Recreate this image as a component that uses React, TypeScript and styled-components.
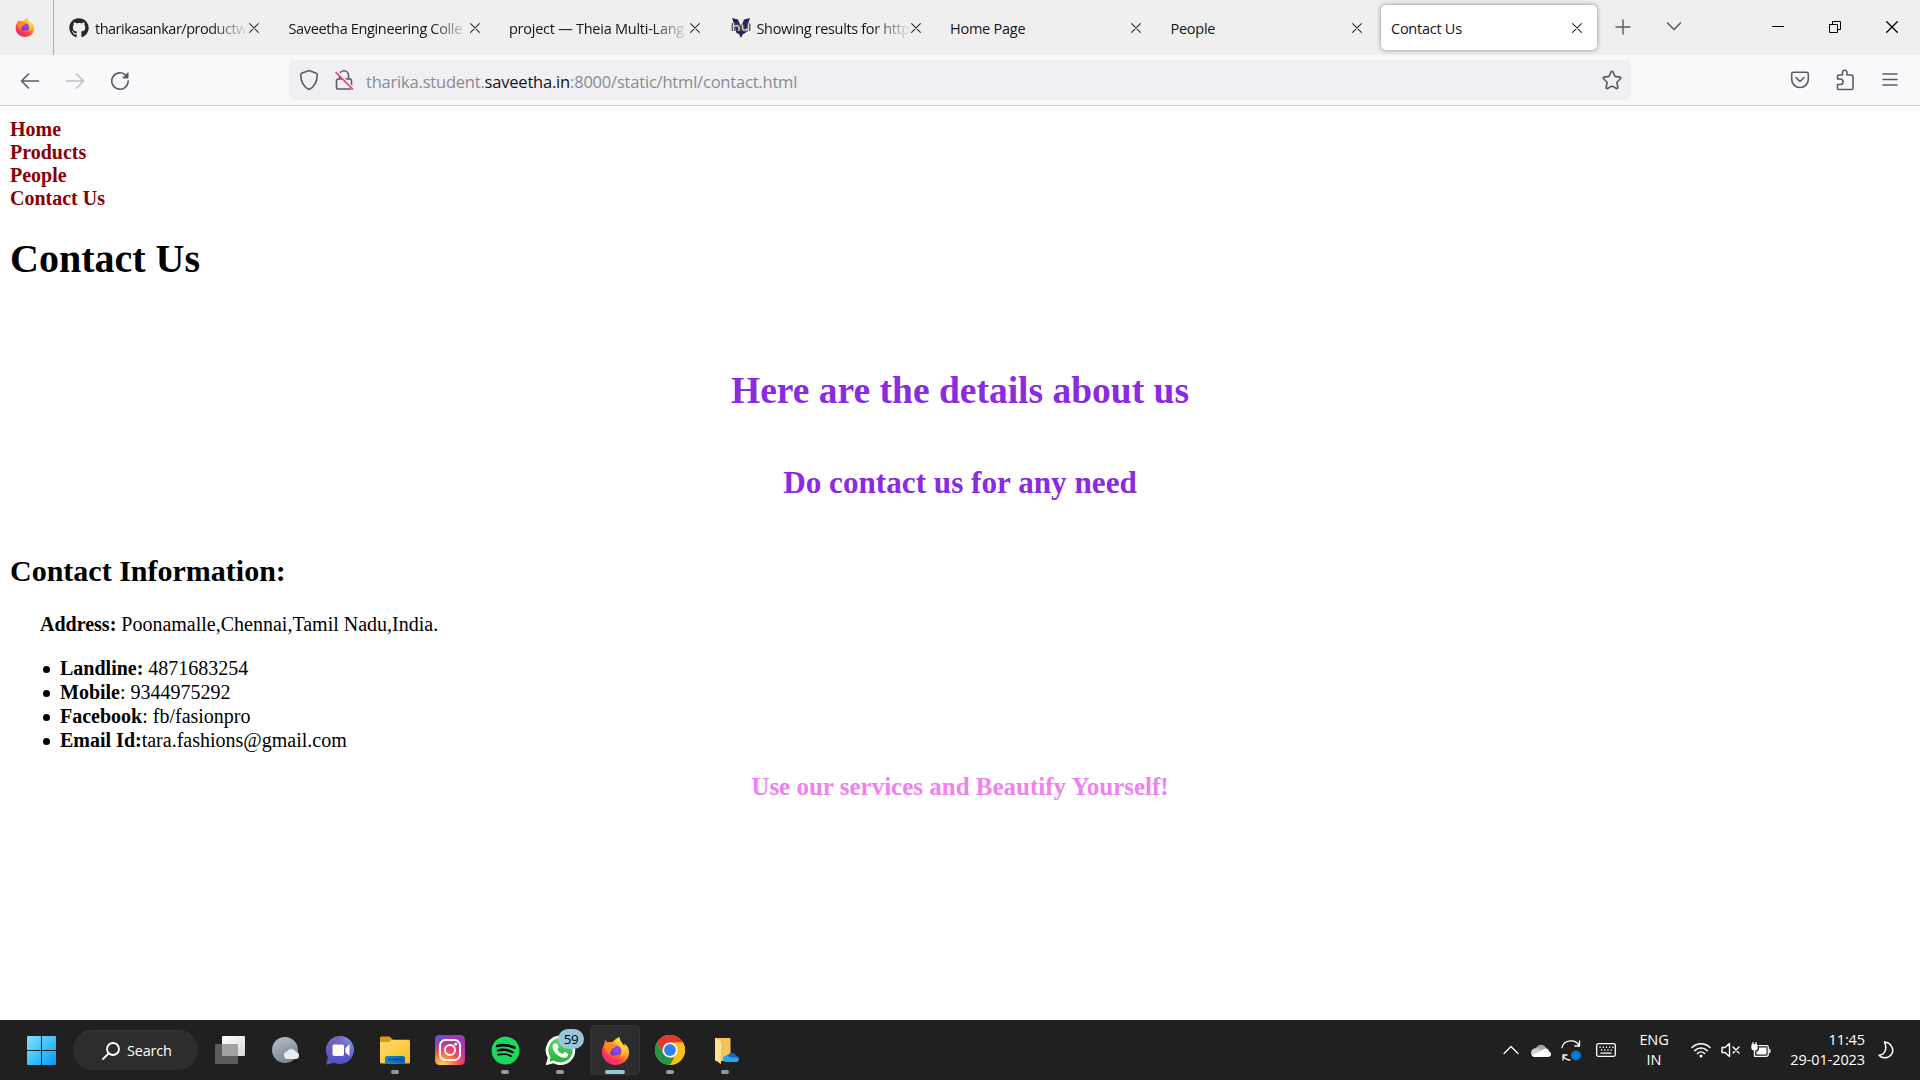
import React from "react";
import styled, { createGlobalStyle, css } from "styled-components";
import { FaGithub, FaSpotify } from "react-icons/fa";

const ui = `"Open Sans", "Noto Sans", sans-serif`;

const Global = createGlobalStyle`
  * { box-sizing: border-box; }
  body { margin: 0; background: #fff; overflow: hidden; }
  svg { display: block; flex: none; }
`;

const Screen = styled.div`
  width: 1920px;
  height: 1080px;
  display: flex;
  flex-direction: column;
  overflow: hidden;
  background: #fff;
`;

/* ---------- browser chrome ---------- */

const TabBar = styled.div`
  height: 55px;
  flex: none;
  display: flex;
  background: #efefef;
  font-family: ${ui};
`;

const PinnedHome = styled.div`
  width: 54px;
  height: 55px;
  border-right: 1px solid #aeaeae;
  display: flex;
  align-items: center;
  padding: 0 0 1px 15px;
`;

const TabList = styled.div`
  display: flex;
  gap: 4.5px;
  padding: 5px 0 0 4px;
`;

const TabItem = styled.div<{ $active?: boolean }>`
  width: 216px;
  height: 45px;
  display: flex;
  align-items: center;
  padding: 0 15px 0 10px;
  border-radius: 5px;
  ${(p) =>
    p.$active &&
    css`
      background: #fff;
      box-shadow: 0 0 5px rgba(0, 0, 0, 0.42);
    `}
`;

const Favicon = styled.span`
  width: 20px;
  height: 20px;
  margin: 0 6px 0 1px;
  flex: none;
  color: #24292f;
`;

const TabLabel = styled.span<{ $fade?: boolean; $spacing?: number }>`
  flex: 1;
  min-width: 0;
  white-space: nowrap;
  font-size: 14.5px;
  line-height: 24px;
  padding-top: 2px;
  letter-spacing: ${(p) => p.$spacing ?? -0.25}px;
  color: #15141a;
  ${(p) =>
    p.$fade &&
    css`
      mask-image: linear-gradient(to left, transparent, #000 38px);
    `}
`;

const TabActions = styled.div`
  display: flex;
  align-items: center;
  padding: 0 0 1px 16px;
  gap: 33px;
`;

const WindowControls = styled.div`
  margin-left: auto;
  display: flex;
  align-items: center;
  gap: 45px;
  padding: 0 22px 1px 0;
`;

const Toolbar = styled.div`
  height: 51px;
  flex: none;
  display: flex;
  align-items: center;
  background: #f9f9fb;
  border-bottom: 1px solid #cccccf;
  font-family: ${ui};
`;

const NavButtons = styled.div`
  display: flex;
  gap: 25px;
  padding: 1px 0 0 20px;
  width: 289px;
`;

const UrlBar = styled.div`
  width: 1342px;
  height: 40px;
  border-radius: 5px;
  background: #f0f0f4;
  display: flex;
  align-items: center;
  padding: 0 9px 0 10px;
`;

const LockSlot = styled.span`
  margin-left: 15px;
`;

const Url = styled.span`
  flex: 1;
  margin-left: 12px;
  padding-top: 3px;
  font-size: 16.5px;
  line-height: 24px;
  letter-spacing: -0.2px;
  color: #8b8b90;
  white-space: nowrap;
`;

const Host = styled.span`
  color: #15141a;
`;

const ToolbarEnd = styled.div`
  margin-left: auto;
  display: flex;
  align-items: center;
  gap: 25px;
  padding-right: 20px;
`;

/* ---------- page ---------- */

const Page = styled.main`
  flex: 1;
  padding: 12px 10px 0;
  font-family: "Liberation Serif", "Times New Roman", serif;
  font-size: 20px;
  color: #000;
`;

const NavLink = styled.a`
  display: block;
  line-height: 23px;
  font-weight: bold;
  color: #8b0000;
`;

const Title = styled.h1`
  margin: 26px 0 0;
  font-size: 40px;
  line-height: 46px;
`;

const Banner = styled.h2<{ $size: number; $top: number; $line: number; $color?: string }>`
  margin: ${(p) => p.$top}px 0 0;
  font-size: ${(p) => p.$size}px;
  line-height: ${(p) => p.$line}px;
  text-align: center;
  color: ${(p) => p.$color ?? "#8a2be2"};
`;

const Section = styled.h2`
  margin: 53px 0 0;
  font-size: 30px;
  line-height: 34px;
`;

const Address = styled.p`
  margin: 24px 0 0 30px;
  line-height: 24px;
`;

const Details = styled.ul`
  margin: 20px 0 0;
  padding-left: 32.500px;
  line-height: 24px;
  list-style: none;
`;

const Detail = styled.li`
  &::before {
    content: "";
    display: inline-block;
    width: 7.5px;
    height: 7.5px;
    margin-right: 10px;
    border-radius: 50%;
    background: #000;
    vertical-align: 2px;
  }
`;

/* ---------- taskbar ---------- */

const Taskbar = styled.footer`
  height: 60px;
  flex: none;
  display: flex;
  align-items: center;
  background: #202020;
  color: #fff;
  font-family: ${ui};
`;

const StartSlot = styled.div`
  width: 73px;
  padding-left: 27px;
`;

const SearchPill = styled.div`
  width: 125px;
  height: 40px;
  border-radius: 20px;
  background: #2d2d2d;
  border-top: 1px solid #383838;
  display: flex;
  align-items: center;
  gap: 7px;
  padding-left: 29px;
  margin-right: 7px;
  font-size: 14.5px;
  letter-spacing: -0.2px;
`;

const AppCell = styled.div<{ $active?: boolean }>`
  width: 50px;
  height: 50px;
  margin-right: 5px;
  border-radius: 5px;
  display: grid;
  place-items: center;
  position: relative;
  ${(p) =>
    p.$active &&
    css`
      background: #2d2d2d;
      box-shadow: inset 0 0 0 1px #353535;
    `}
`;

const Indicator = styled.i<{ $active?: boolean }>`
  position: absolute;
  bottom: 1px;
  left: 50%;
  transform: translateX(-50%);
  width: ${(p) => (p.$active ? 20 : 8)}px;
  height: 4px;
  border-radius: 2px;
  background: ${(p) => (p.$active ? "#99c6dd" : "#9a9a9a")};
`;

const Badge = styled.span`
  position: absolute;
  left: 23px;
  top: 4px;
  width: 26px;
  height: 20px;
  border-radius: 10px;
  background: #99c6dd;
  color: #000;
  font-size: 13.5px;
  line-height: 20px;
  letter-spacing: -0.4px;
  text-align: center;
`;

const Tray = styled.div`
  margin-left: auto;
  display: flex;
  align-items: center;
  padding-right: 26px;
`;

const TrayIcon = styled.span<{ $gap: number }>`
  margin-right: ${(p) => p.$gap}px;
`;

const TrayText = styled.div<{ $align: string; $width: number; $gap: number; $spacing?: number }>`
  width: ${(p) => p.$width}px;
  margin-right: ${(p) => p.$gap}px;
  text-align: ${(p) => p.$align};
  font-size: 14.5px;
  line-height: 20px;
  letter-spacing: ${(p) => p.$spacing ?? 0}px;
  white-space: nowrap;
`;

/* ---------- icons ---------- */

const CloseX = ({ size = 10, color = "#2b2a33" }: { size?: number; color?: string }) => (
  <svg width={size} height={size} viewBox="0 0 10 10" fill="none" stroke={color} strokeWidth="1.1" strokeLinecap="round">
    <path d="M.6.6 9.4 9.4M9.4.6.6 9.4" />
  </svg>
);

const Firefox = ({ size, id }: { size: number; id: string }) => (
  <svg width={size} height={size} viewBox="0 0 30 30">
    <defs>
      <linearGradient id={`${id}a`} x1=".85" y1=".1" x2=".2" y2=".95">
        <stop offset="0" stopColor="#fff44f" />
        <stop offset=".35" stopColor="#ffa52b" />
        <stop offset=".65" stopColor="#ff4a3d" />
        <stop offset="1" stopColor="#f0208c" />
      </linearGradient>
      <linearGradient id={`${id}b`} x1=".8" y1="0" x2=".3" y2="1">
        <stop offset="0" stopColor="#fff352" />
        <stop offset="1" stopColor="#ff9a1f" />
      </linearGradient>
      <radialGradient id={`${id}c`} cx=".6" cy=".4" r=".6">
        <stop offset="0" stopColor="#a44cf5" />
        <stop offset="1" stopColor="#5b3ccd" />
      </radialGradient>
    </defs>
    <path fill={`url(#${id}a)`} d="M19 1c-.5 2.500-.1 4 1.800 6 1.600 1.600 2.600 2.500 3.200 4 .4-1 .4-2.200.1-3.200C27.500 10 29 13.500 29 17c0 7.300-6.200 13-14 13S1 24 1 16.500c0-3.200 1-6 2.500-8.200.2-1.700.8-3.300 1.700-4.300.2 1.200.6 2 1.200 2.600C8.500 6 10 6.300 11 6.500 14 4.800 15 2.500 19 1Z" />
    <circle cx="15" cy="15.500" r="5.800" fill={`url(#${id}c)`} />
    <path fill={`url(#${id}b)`} d="M19 1c-3.500 2.500-4 5-3.600 7.300 2.600.3 5 2 6 4.300 1.400 3.200.4 7-2 9.200 5-1.300 7.300-5.800 5.200-10.400C23.500 8.600 19.600 6 19 1Z" />
    <path fill="#ff8a25" d="M3.500 8.300C5.500 6 9 6 11 7c.6 1 1.700 2.200 4.500 3-.2 2-2.500 2.300-3.800 3-1 .6-.9 1.600-.7 2.400-2 0-2.400 2.600-1.200 4.500C5 18 3.500 12.500 3.500 8.300Z" />
    <path fill="#ff5e36" d="M8.800 17.500c1.800 3.300 5.200 3.200 8 1.900 1.200-.5 2-.2 2.500.4-2 3.400-8.500 4.200-10.500-2.300Z" />
  </svg>
);

const HuFavicon = () => (
  <svg width="20" height="20" viewBox="0 0 20 20">
    <path fill="#25235c" d="M1 0 7 1.500 10 9l3-7.500L19 0l-2.500 7.500L14.500 15 12 16l-2 4-2-4-2.500-1-2-7.500Z" />
    <path fill="none" stroke="#4a4a4c" strokeWidth="3.800" strokeLinejoin="round" d="M2.500 13V5m0 4c1.500-2 5.500-2 5.500 1v3m3.500-6.500v3.500c0 3 4.500 2.500 6 .5m0-5v7.500" />
    <path fill="none" stroke="#d0d0d4" strokeWidth="1.400" d="M2.500 13V5m0 4c1.500-2 5.500-2 5.500 1v3m3.500-6.500v3.500c0 3 4.500 2.500 6 .5m0-5v7.500" />
  </svg>
);

const line = { fill: "none", stroke: "#5b5b66", strokeWidth: 1.6, strokeLinecap: "round", strokeLinejoin: "round" } as const;

const Arrow = ({ forward }: { forward?: boolean }) => (
  <svg width="20" height="20" viewBox="0 0 20 20" {...line} stroke={forward ? "#bebec3" : "#5b5b66"}>
    <path d={forward ? "M1.500 10h17M11.500 3l7 7-7 7" : "M18.500 10h-17M8.500 3l-7 7 7 7"} />
  </svg>
);

const Reload = () => (
  <svg width="20" height="20" viewBox="0 0 20 20" {...line}>
    <path d="M16 4.400A8.200 8.200 0 1 0 18.200 10" />
    <path d="M18 2v5h-5Z" fill="#5b5b66" strokeWidth="1" />
  </svg>
);

const Shield = () => (
  <svg width="20" height="22" viewBox="0 0 20 22" {...line}>
    <path d="M10 1.500 17.300 4.200c.7.300 1 .8 1 1.500C18.200 12 16 17.500 10 20.500 4 17.500 1.800 12 1.700 5.700c0-.7.300-1.200 1-1.500Z" />
  </svg>
);

const BrokenLock = () => (
  <svg width="20" height="22" viewBox="0 0 20 22" {...line}>
    <path d="M5.500 10V6.300a4.500 4.500 0 0 1 9 0V10M4.300 10h11.400c1 0 1.800.8 1.800 1.800v6.400c0 1-.8 1.800-1.800 1.800H4.300c-1 0-1.800-.8-1.800-1.800v-6.400c0-1 .8-1.800 1.800-1.800Z" />
    <path d="m3 3 16 17" stroke="#f0f0f4" strokeWidth="3" />
    <path d="m2 3.500 16.500 16.500" stroke="#f0305f" />
  </svg>
);

const Star = () => (
  <svg width="20" height="20" viewBox="0 0 20 20" {...line}>
    <path d="M9.200 1.700a.9.900 0 0 1 1.600 0l2.200 4.700 5 .7c.8.100 1.100 1 .5 1.600l-3.600 3.600.9 5.200c.1.800-.7 1.300-1.300 1L10 16l-4.500 2.500c-.7.300-1.400-.2-1.300-1l.9-5.200L1.500 8.700c-.6-.6-.3-1.500.5-1.600l5-.7Z" />
  </svg>
);

const Pocket = () => (
  <svg width="20" height="20" viewBox="0 0 20 20" {...line}>
    <path d="M3.300 2.300h13.400c.9 0 1.600.7 1.600 1.600v5.300a8.300 8.300 0 0 1-16.600 0V3.900c0-.9.700-1.600 1.600-1.600Z" />
    <path d="m6 7.500 4 4 4-4" />
  </svg>
);

const Puzzle = () => (
  <svg width="20" height="22" viewBox="0 0 20 22" {...line}>
    <path d="M2.500 10V7.500c0-.9.600-1.500 1.500-1.500h3.500V3.500a2.200 2.200 0 0 1 4.400 0V6h4.600c.8 0 1.500.6 1.500 1.500V19c0 .8-.6 1.500-1.500 1.500H4c-.8 0-1.500-.6-1.500-1.500v-3.500h2.800a2.700 2.700 0 0 0 0-5.500Z" />
  </svg>
);

const Menu = () => (
  <svg width="20" height="20" viewBox="0 0 20 20" {...line}>
    <path d="M3 4h14M3 9.500h14M3 15h14" />
  </svg>
);

const Start = () => (
  <svg width="29" height="29" viewBox="0 0 29 29">
    <defs>
      <linearGradient id="win" x1="0" y1="0" x2="1" y2="1">
        <stop offset="0" stopColor="#86ddff" />
        <stop offset=".5" stopColor="#3fc4fb" />
        <stop offset="1" stopColor="#0a93f6" />
      </linearGradient>
    </defs>
    <path fill="url(#win)" d="M1 0h13v14H0V1a1 1 0 0 1 1-1Zm14 0h13a1 1 0 0 1 1 1v13H15ZM0 15h14v14H1a1 1 0 0 1-1-1Zm15 0h14v13a1 1 0 0 1-1 1H15Z" />
  </svg>
);

const TaskView = () => (
  <svg width="30" height="28" viewBox="0 0 30 28">
    <defs>
      <linearGradient id="tv" x1="0" y1="0" x2="1" y2="1">
        <stop offset="0" stopColor="#fff" />
        <stop offset="1" stopColor="#d8d8d8" />
      </linearGradient>
    </defs>
    <rect x="7" width="23" height="20" rx="1" fill="url(#tv)" />
    <rect y="8" width="23" height="20" rx="1" fill="#5c5c5c" />
    <rect x="7" y="8" width="16" height="12" fill="#a2a2a2" />
  </svg>
);

const Weather = () => (
  <svg width="30" height="28" viewBox="0 0 30 28">
    <defs>
      <linearGradient id="moon" x1=".2" y1="0" x2=".7" y2="1">
        <stop offset="0" stopColor="#b4bcc6" />
        <stop offset="1" stopColor="#76828f" />
      </linearGradient>
    </defs>
    <circle cx="15" cy="14" r="13" fill="url(#moon)" />
    <path fill="#e8ecf0" d="M17 23a4 4 0 0 1 .2-7.800 5 5 0 0 1 8.800.8 3.600 3.600 0 0 1 .5 7Z" />
  </svg>
);

const Chat = () => (
  <svg width="29" height="29" viewBox="0 0 29 29">
    <defs>
      <linearGradient id="chat" x1="0" y1="0" x2="0" y2="1">
        <stop offset="0" stopColor="#8168b5" />
        <stop offset="1" stopColor="#4f52c8" />
      </linearGradient>
      <linearGradient id="chatHi" x1="0" y1="1" x2="1" y2="0">
        <stop offset=".5" stopColor="#6f8df0" stopOpacity="0" />
        <stop offset="1" stopColor="#7db4ff" />
      </linearGradient>
    </defs>
    <path fill="url(#chat)" d="M14.500 0a14 14 0 1 1-6.300 26.800L1.500 28.500c-.8.100-1.300-.4-1.100-1.200l1.600-6A14 14 0 0 1 14.500 0Z" />
    <path fill="url(#chatHi)" d="M14.500 0a14 14 0 1 1-6.300 26.800Z" />
    <rect x="6.500" y="8.500" width="11.500" height="11.500" rx="1.800" fill="#fff" />
    <path fill="#fff" d="m19.500 12 3-2.800c.5-.4 1-.2 1 .4v9.300c0 .6-.5.800-1 .4l-3-2.800Z" />
  </svg>
);

const Explorer = () => (
  <svg width="30" height="28" viewBox="0 0 30 28">
    <defs>
      <linearGradient id="fold" x1="0" y1="0" x2="1" y2="1">
        <stop offset="0" stopColor="#ffdc70" />
        <stop offset="1" stopColor="#f9bd1c" />
      </linearGradient>
      <linearGradient id="foldBlue" x1="0" y1="0" x2="1" y2="0">
        <stop offset="0" stopColor="#1687d4" />
        <stop offset="1" stopColor="#0562ae" />
      </linearGradient>
    </defs>
    <path fill="#dd9d08" d="M0 2c0-.9.600-1.500 1.500-1.500H9c.7 0 1 .2 1.500.700L13 4v5H0Z" />
    <path fill="url(#fold)" d="M0 6h8c1 0 1.500-.2 2-.7l1.700-1.600h16.800c.9 0 1.500.6 1.500 1.500V26c0 .9-.6 1.500-1.500 1.500h-27C.6 27.500 0 26.900 0 26Z" />
    <path fill="url(#foldBlue)" d="M5 27.500V22c0-1.200.8-2 2-2h16c1.200 0 2 .8 2 2v5.500Z" />
    <path stroke="#06457e" strokeWidth="1.300" strokeLinecap="round" d="M8.500 23.500h13" />
  </svg>
);

const Instagram = () => (
  <svg width="30" height="30" viewBox="0 0 30 30">
    <defs>
      <radialGradient id="ig1" cx=".25" cy="1.050" r="1.050">
        <stop offset="0" stopColor="#ffdc63" />
        <stop offset=".25" stopColor="#ff9b45" />
        <stop offset=".5" stopColor="#f8514b" />
        <stop offset=".78" stopColor="#c9349e" />
        <stop offset="1" stopColor="#a236bd" />
      </radialGradient>
      <radialGradient id="ig2" cx="0" cy="0" r=".6">
        <stop offset="0" stopColor="#4168dc" />
        <stop offset="1" stopColor="#6b45cf" stopOpacity="0" />
      </radialGradient>
    </defs>
    <rect width="30" height="30" rx="4.500" fill="url(#ig1)" />
    <rect width="30" height="30" rx="4.500" fill="url(#ig2)" />
    <g fill="none" stroke="#fff" strokeWidth="2">
      <rect x="5" y="5" width="20" height="20" rx="5.500" />
      <circle cx="15" cy="15" r="5" />
    </g>
    <circle cx="20.700" cy="9.200" r="1.400" fill="#fff" />
  </svg>
);

const SpotifyDisc = styled.span`
  display: grid;
  place-items: center;
  width: 28px;
  height: 28px;
  border-radius: 50%;
  background: #000;
  color: #1ed760;
`;

const WhatsApp = () => (
  <svg width="31" height="31" viewBox="0 0 31 31">
    <defs>
      <linearGradient id="wa" x1="0" y1="0" x2="0" y2="1">
        <stop offset="0" stopColor="#5fd668" />
        <stop offset="1" stopColor="#23b33a" />
      </linearGradient>
    </defs>
    <path fill="#fff" d="M15.500.5a14.700 14.700 0 0 1 0 29.500c-2.500 0-5-.6-7-1.800L.7 30.300l2.100-7.600A14.700 14.700 0 0 1 15.500.5Z" />
    <path fill="url(#wa)" d="M15.500 3a12.200 12.200 0 1 1-6.600 22.500l-4.600 1.200 1.300-4.500A12.200 12.200 0 0 1 15.500 3Z" />
    <path fill="#fff" d="M10.300 8.500h1.200c.5 0 .7.200.9.600l1.200 2.900c.2.400.1.700-.2 1.100l-1.100 1.400c1.300 2.200 3 3.600 5.300 4.500l1.400-1.700c.3-.3.600-.4 1-.2l2.900 1.400c.4.200.5.500.4 1-.3 2-1.700 3.100-3.600 3.200-5.600.3-12.300-6-12.200-11.200 0-1.300.8-2.300 1.600-2.800.4-.200.8-.200 1.200-.2Z" />
  </svg>
);

const Chrome = () => (
  <svg width="30" height="30" viewBox="0 0 30 30">
    <circle cx="15" cy="15" r="15" fill="#fbc116" />
    <path fill="#df3b2f" d="M2 7.500A15 15 0 0 1 28 7.500H15L8.500 18.700Z" />
    <path fill="#289447" d="M2 7.500 8.500 18.700 15 22.500h6.500L15 30A15 15 0 0 1 2 7.500Z" />
    <path fill="#fbc116" d="M28 7.500A15 15 0 0 1 15 30l6.500-11.300V7.500Z" />
    <circle cx="15" cy="15" r="7.500" fill="#fff" />
    <circle cx="15" cy="15" r="5.900" fill="#3182f0" />
  </svg>
);

const CloudFolder = () => (
  <svg width="30" height="28" viewBox="0 0 30 28">
    <path fill="#f2c55b" d="M5 2h14.500c.7 0 1 .3 1 1v22H5Z" />
    <path fill="#fde39a" d="m5 2 5 3c.7.400 1 .8 1 1.600V27c0 .9-.5 1-1.100.5L5.600 24c-.4-.4-.6-.7-.6-1.300Z" />
    <path fill="#1269b8" d="M15.500 22c0-2 1.500-3.300 3.300-3.300.8-2.500 5.700-3.200 7.200.8 1.800.3 3 1.600 3 3.200 0 2-1.300 3-3 3h-7.500c-1.800 0-3-1.500-3-3.700Z" />
    <path fill="#2ba5ee" d="M13 22.800c0-1.800 1.400-3 3.200-3 2.500.200 4 1.500 6.300 2.200 1.600-1.200 3.500-.8 5.500 0 1.500 1.600.5 4-2.200 4H16c-1.700 0-3-1.300-3-3.200Z" />
  </svg>
);

const white = { fill: "none", stroke: "#fff", strokeWidth: 1.3, strokeLinecap: "round", strokeLinejoin: "round" } as const;

const tabs = [
  { label: "tharikasankar/productw", icon: <FaGithub size={20} />, fade: true, spacing: -0.5 },
  { label: "Saveetha Engineering Colle", fade: true, spacing: -0.35 },
  { label: "project — Theia Multi-Lang", fade: true, spacing: -0.25 },
  { label: "Showing results for http", icon: <HuFavicon />, fade: true, spacing: -0.35 },
  { label: "Home Page" },
  { label: "People" },
  { label: "Contact Us", active: true },
];

const details = [
  ["Landline:", " 4871683254"],
  ["Mobile", ": 9344975292"],
  ["Facebook", ": fb/fasionpro"],
  ["Email Id:", "tara.fashions@gmail.com"],
];

const apps = [
  { icon: <TaskView /> },
  { icon: <Weather /> },
  { icon: <Chat /> },
  { icon: <Explorer />, running: true },
  { icon: <Instagram /> },
  { icon: <SpotifyDisc><FaSpotify size={29} /></SpotifyDisc>, running: true },
  { icon: <WhatsApp />, running: true, badge: "59" },
  { icon: <Firefox size={29} id="fxTask" />, running: true, active: true },
  { icon: <Chrome />, running: true },
  { icon: <CloudFolder />, running: true },
];

export default function App() {
  return (
    <Screen>
      <Global />
      <TabBar>
        <PinnedHome>
          <Firefox size={20} id="fxPin" />
        </PinnedHome>
        <TabList>
          {tabs.map((t) => (
            <TabItem key={t.label} $active={t.active}>
              {t.icon && <Favicon>{t.icon}</Favicon>}
              <TabLabel $fade={t.fade} $spacing={t.spacing}>{t.label}</TabLabel>
              <CloseX />
            </TabItem>
          ))}
        </TabList>
        <TabActions>
          <svg width="20" height="20" viewBox="0 0 20 20" {...line} strokeWidth={1.4}>
            <path d="M10 3v14M3 10h14" />
          </svg>
          <svg width="16" height="20" viewBox="0 0 16 20" {...line}>
            <path d="m1.500 6 6.500 6.500L14.500 6" />
          </svg>
        </TabActions>
        <WindowControls>
          <svg width="12" height="12" viewBox="0 0 12 12" stroke="#000">
            <path d="M0 5.500h12" />
          </svg>
          <svg width="12" height="13" viewBox="0 0 12 13" stroke="#000" fill="none">
            <path d="M.5 3.500h8v8h-8ZM3.500 3V.500h8v8H9" />
          </svg>
          <CloseX size={12} color="#000" />
        </WindowControls>
      </TabBar>
      <Toolbar>
        <NavButtons>
          <Arrow />
          <Arrow forward />
          <Reload />
        </NavButtons>
        <UrlBar>
          <Shield />
          <LockSlot>
            <BrokenLock />
          </LockSlot>
          <Url>
            tharika.student.<Host>saveetha.in</Host>:8000/static/html/contact.html
          </Url>
          <Star />
        </UrlBar>
        <ToolbarEnd>
          <Pocket />
          <Puzzle />
          <Menu />
        </ToolbarEnd>
      </Toolbar>

      <Page>
        <nav>
          <NavLink>Home</NavLink>
          <NavLink>Products</NavLink>
          <NavLink>People</NavLink>
          <NavLink>Contact Us</NavLink>
        </nav>
        <Title>Contact Us</Title>
        <Banner $size={37.5} $top={87} $line={44}>Here are the details about us</Banner>
        <Banner $size={31.2} $top={52} $line={36}>Do contact us for any need</Banner>
        <Section>Contact Information:</Section>
        <Address>
          <b>Address:</b> Poonamalle,Chennai,Tamil Nadu,India.
        </Address>
        <Details>
          {details.map(([name, value]) => (
            <Detail key={name}>
              <b>{name}</b>
              {value}
            </Detail>
          ))}
        </Details>
        <Banner $size={25} $top={21} $line={28} $color="#ee82ee">Use our services and Beautify Yourself!</Banner>
      </Page>

      <Taskbar>
        <StartSlot>
          <Start />
        </StartSlot>
        <SearchPill>
          <svg width="18" height="18" viewBox="0 0 18 18" {...white} strokeWidth={1.8}>
            <circle cx="11" cy="7" r="6" />
            <path d="M6.700 11.300 1 17" />
          </svg>
          Search
        </SearchPill>
        {apps.map((a, i) => (
          <AppCell key={i} $active={a.active}>
            {a.icon}
            {a.running && <Indicator $active={a.active} />}
            {a.badge && <Badge>{a.badge}</Badge>}
          </AppCell>
        ))}
        <Tray>
          <TrayIcon $gap={12}>
            <svg width="16" height="10" viewBox="0 0 16 10" {...white}>
              <path d="m1 8.500 7-7 7 7" />
            </svg>
          </TrayIcon>
          <TrayIcon $gap={10}>
            <svg width="20" height="13" viewBox="0 0 20 13">
              <path fill="#a6a6a6" d="M4.500 5C6 .5 12.500-1.500 15.500 4.500L12 8Z" />
              <path fill="#d0d0d0" d="M4.500 13C1.500 13 0 11 0 8.700 0 6.500 2 4 5 4.200c2 0 3 .6 4 1.200l6 5Z" />
              <path fill="#fff" d="M4 13c-1.500 0-2.700-.7-3.400-1.800L11 6.500c.8-1.500 2.400-2.200 4-2 2 .2 3 1.700 3.200 3C19.300 8 20 9 20 10.200c0 1.700-1.300 2.800-3 2.800Z" />
            </svg>
          </TrayIcon>
          <TrayIcon $gap={15}>
            <svg width="20" height="21" viewBox="0 0 20 21" {...white}>
              <path d="M1 7.500C3-.5 14.500-1.500 18.500 6V1M18.500 6H14" />
              <path d="M9 20c-3 0-6-2-7-5v5M2 15h4" />
              <circle cx="15" cy="15.500" r="5" fill="#0078d7" stroke="none" />
            </svg>
          </TrayIcon>
          <TrayIcon $gap={18}>
            <svg width="20" height="14" viewBox="0 0 20 14" {...white}>
              <rect x=".7" y=".7" width="18.600" height="12.600" rx="1.500" />
              <path strokeDasharray="1.200 2" strokeLinecap="butt" strokeWidth="1.600" d="M3.500 4.200h14M5 7h11" />
              <path d="M5 10.200h10" />
            </svg>
          </TrayIcon>
          <TrayText $align="center" $width={40} $gap={17} $spacing={-0.1}>
            ENG
            <br />
            IN
          </TrayText>
          <TrayIcon $gap={10}>
            <svg width="20" height="16" viewBox="0 0 20 16" {...white} strokeWidth={1.5}>
              <path d="M1 5.500a12.700 12.700 0 0 1 18 0M3.800 8.600a8.800 8.800 0 0 1 12.400 0M6.500 11.500a5 5 0 0 1 7 0" />
              <circle cx="10" cy="14" r="1.500" fill="#fff" stroke="none" />
            </svg>
          </TrayIcon>
          <TrayIcon $gap={10}>
            <svg width="20" height="16" viewBox="0 0 20 16" {...white} strokeWidth={1.4}>
              <path d="M1 5.500h3L8.500 1.500v13L4 10.500H1ZM12 5l6 6M18 5l-6 6" />
            </svg>
          </TrayIcon>
          <TrayIcon $gap={14}>
            <svg width="20" height="16" viewBox="0 0 20 16" {...white}>
              <path fill="#fff" d="M1 3h5v3c0 1-.5 2-2.500 2S1 7 1 6Z" />
              <path d="M2 .7V3M5 .7V3M3.500 8v6.300H15.500c1 0 1.800-.8 1.800-1.800V5.500c0-1-.8-1.800-1.800-1.800H8M18.800 7.500v3" />
              <path fill="#fff" stroke="none" d="M8 5.500h7.500v7H5.500V9.800C7 9.300 8 8 8 6.500Z" />
            </svg>
          </TrayIcon>
          <TrayText $align="right" $width={80} $gap={13} $spacing={-0.1}>
            11:45
            <br />
            29-01-2023
          </TrayText>
          <svg width="16" height="18" viewBox="0 0 16 18" {...white} strokeWidth={1.5}>
            <path d="M6.500 1c7 .5 10.500 8.500 6.500 13-3.500 4-9.500 3.500-12 .3C7 13.500 9.500 8 6.500 1Z" />
          </svg>
        </Tray>
      </Taskbar>
    </Screen>
  );
}
